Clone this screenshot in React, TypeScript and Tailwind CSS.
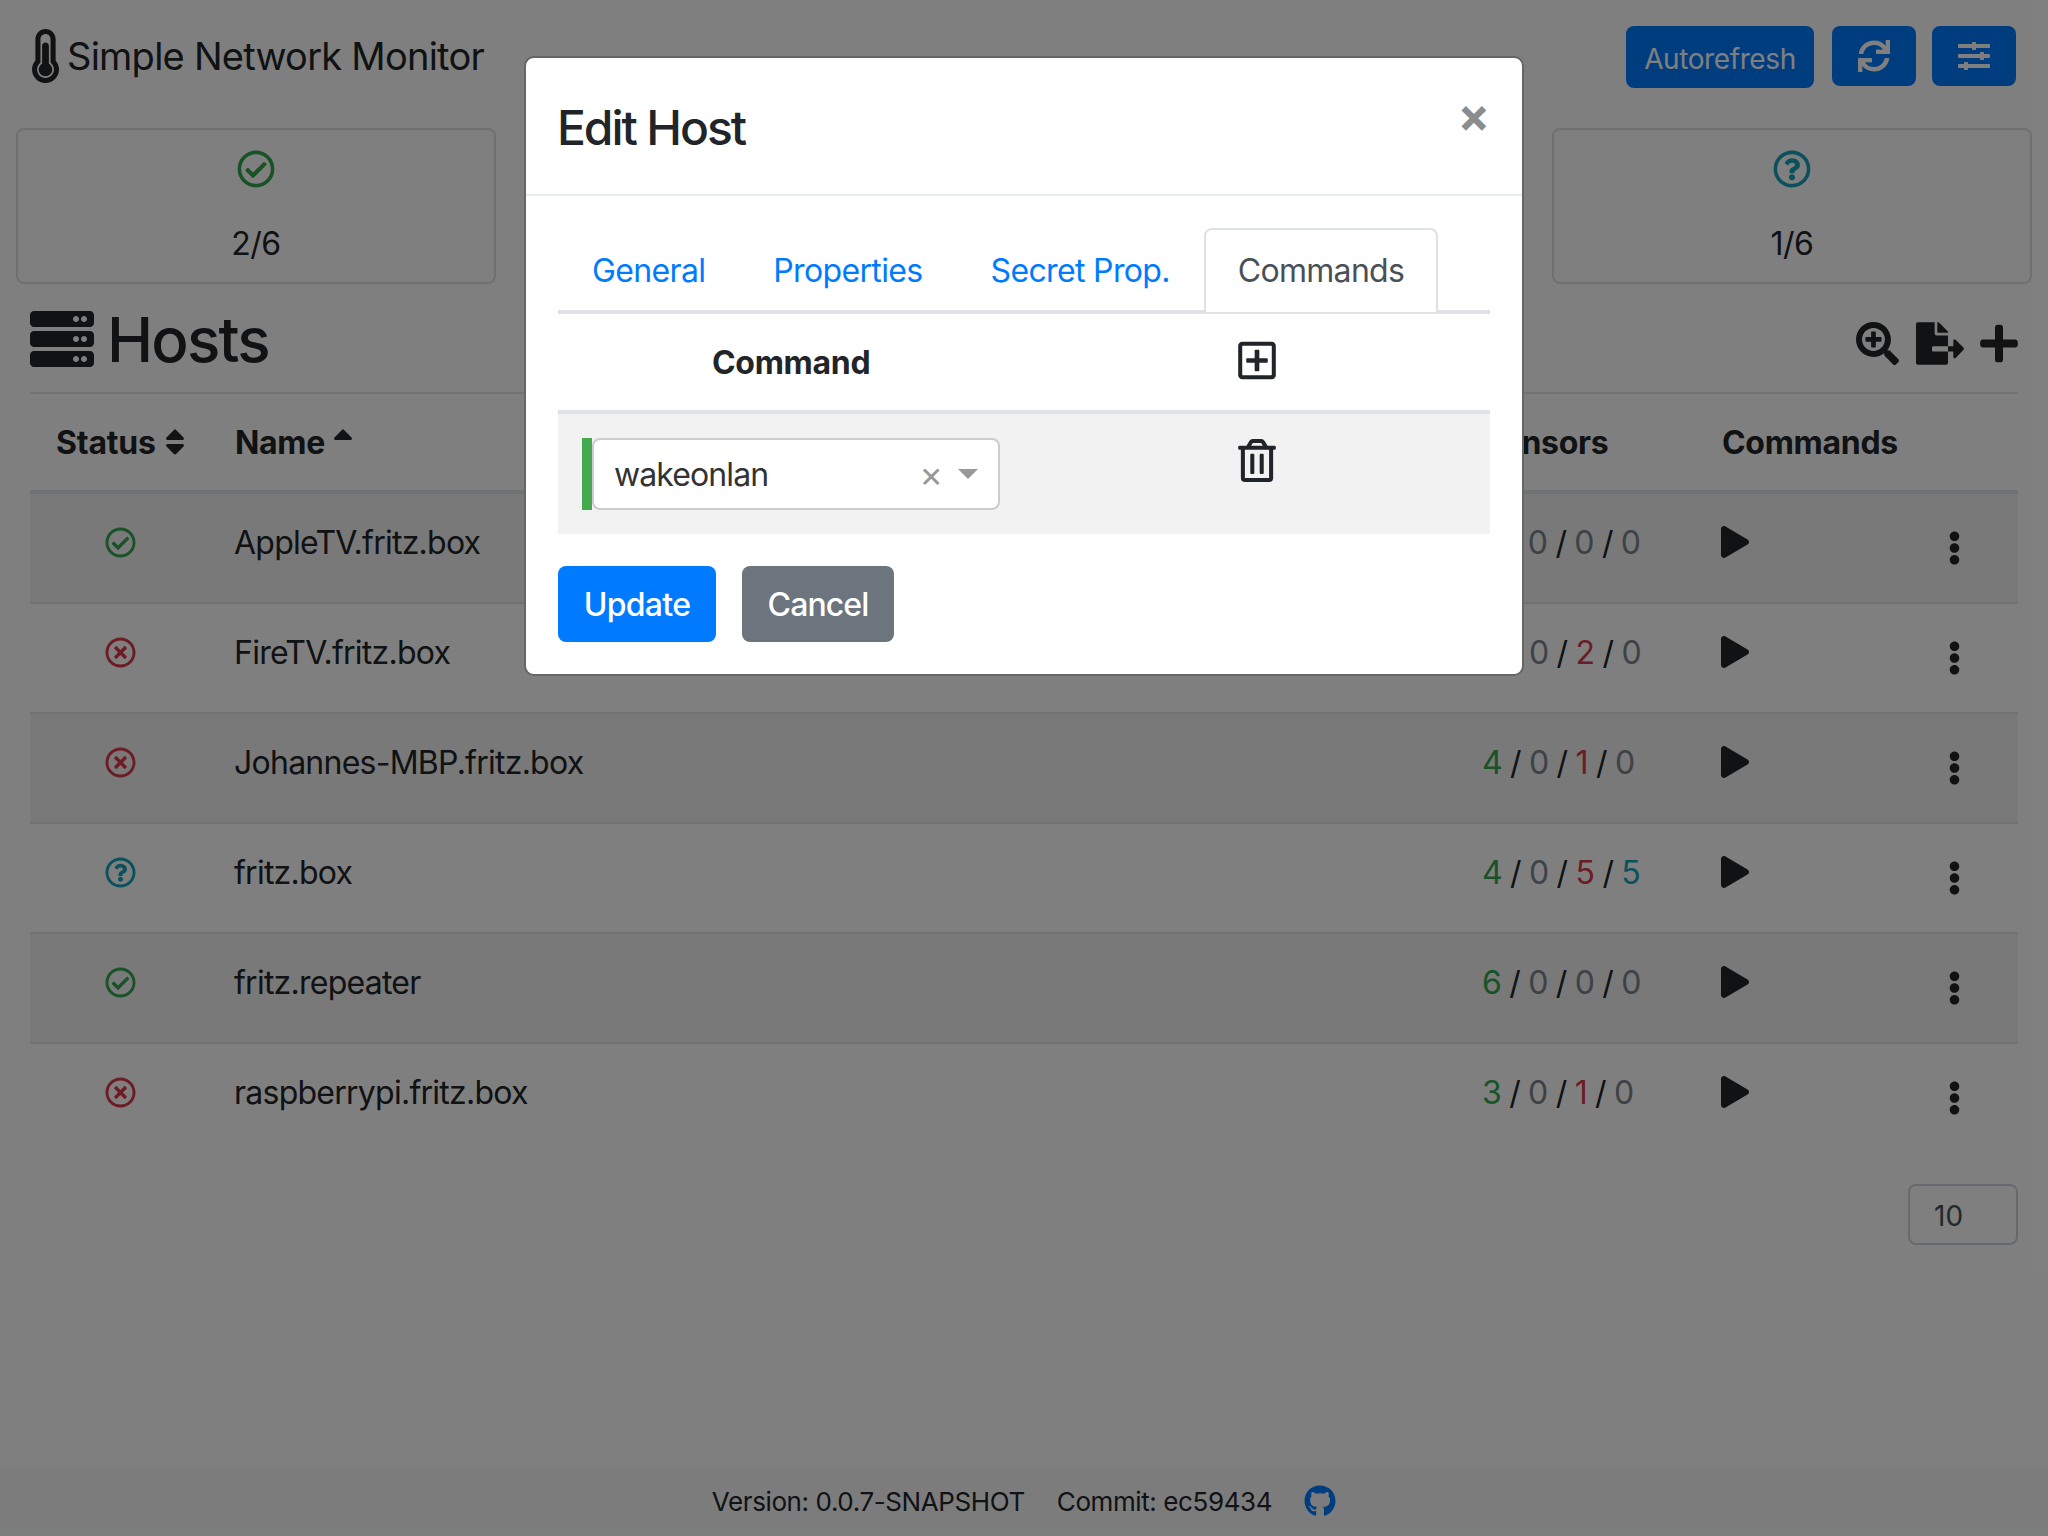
import {
  FaGithub,
  FaPlay,
  FaEllipsisV,
  FaFileExport,
  FaPlus,
  FaRegCheckCircle,
  FaRegPlusSquare,
  FaRegQuestionCircle,
  FaRegTimesCircle,
  FaRegTrashAlt,
  FaSearchPlus,
  FaServer,
  FaSlidersH,
  FaSort,
  FaSortUp,
  FaSync,
  FaThermometerThreeQuarters,
} from "react-icons/fa";

type Status = "ok" | "error" | "unknown";

const hosts: { name: string; status: Status; sensors: [number, number, number, number] }[] = [
  { name: "AppleTV.fritz.box", status: "ok", sensors: [5, 0, 0, 0] },
  { name: "FireTV.fritz.box", status: "error", sensors: [4, 0, 2, 0] },
  { name: "Johannes-MBP.fritz.box", status: "error", sensors: [4, 0, 1, 0] },
  { name: "fritz.box", status: "unknown", sensors: [4, 0, 5, 5] },
  { name: "fritz.repeater", status: "ok", sensors: [6, 0, 0, 0] },
  { name: "raspberrypi.fritz.box", status: "error", sensors: [3, 0, 1, 0] },
];

function StatusIcon({ status, className }: { status: Status; className: string }) {
  if (status === "ok") return <FaRegCheckCircle className={`text-[#33a44f] ${className}`} />;
  if (status === "error") return <FaRegTimesCircle className={`text-[#d8384a] ${className}`} />;
  return <FaRegQuestionCircle className={`text-[#17a2b8] ${className}`} />;
}

function SummaryCard({ children, label }: { children?: React.ReactNode; label?: string }) {
  return (
    <div className="h-[156px] w-[480px] rounded-lg border-2 border-[#e0e0e0] flex flex-col items-center pt-[20px]">
      {children}
      {label && <div className="mt-[32px] text-[32px] leading-[48px] tracking-[-0.5px]">{label}</div>}
    </div>
  );
}

// sensor counts: ok / warn / error / unknown, colored only when non zero
function SensorCounts({ values }: { values: number[] }) {
  const colors = ["text-[#33a44f]", "text-[#ffc107]", "text-[#d8384a]", "text-[#17a2b8]"];
  return (
    <div className="w-[239px] pl-[23px] pt-[25px] text-[32px] leading-[48px] tracking-[-0.8px] whitespace-pre">
      {values.map((v, i) => (
        <span key={i}>
          {i > 0 && " / "}
          <span className={v === 0 ? "text-[#7b848c]" : colors[i]}>{v}</span>
        </span>
      ))}
    </div>
  );
}

function HostRow({ host, index }: { host: (typeof hosts)[number]; index: number }) {
  return (
    <div
      className={`flex items-start ${index === 0 ? "h-[108px]" : "h-[110px] border-t-2 border-[#dee2e6]"} ${
        index % 2 === 0 ? "bg-[#f2f2f2]" : ""
      }`}
    >
      <div className="w-[181px] flex justify-center pt-[33px]">
        <StatusIcon status={host.status} className="w-[31px] h-[31px]" />
      </div>
      <div className="w-[1248px] pl-[23px] pt-[25px] text-[32px] leading-[48px] tracking-[-0.75px]">{host.name}</div>
      <SensorCounts values={host.sensors} />
      <div className="w-[232px] pl-[23px] pt-[32px]">
        <FaPlay className="w-[28px] h-[32px]" />
      </div>
      <div className="flex-1 pl-[18px] pt-[37px]">
        <FaEllipsisV className="w-[13px] h-[34px]" />
      </div>
    </div>
  );
}

function EditHostModal() {
  const tabs = ["General", "Properties", "Secret Prop."];
  return (
    <div className="absolute inset-0 bg-black/50 flex justify-center items-start pt-[56px]">
      <div className="w-[1000px] bg-white rounded-[10px] border-2 border-[#666666] text-[#212529]">
        <div className="flex justify-between items-start border-b-2 border-[#e9ecef] p-[32px]">
          <h4 className="text-[48px] leading-[72px] pt-[2px] h-[72px] -ml-[1px] font-medium tracking-[-2.1px]">Edit Host</h4>
          <span className="text-[48px] leading-[48px] pt-[1px] font-bold text-[#8c8c8c]">×</span>
        </div>
        <div className="p-[32px]">
          <div className="flex h-[86px] border-b-4 border-[#dee2e6]">
            {tabs.map((t) => (
              <div key={t} className="px-[34px] pt-[19px] text-[32px] leading-[48px] tracking-[-0.65px] text-[#007bff]">
                {t}
              </div>
            ))}
            <div className="h-[84px] px-[32px] pt-[17px] border-2 border-b-0 border-[#dee2e6] rounded-t-lg bg-white text-[32px] leading-[48px] tracking-[-0.7px] text-[#495057]">
              Commands
            </div>
          </div>

          <div className="flex h-[100px] border-b-4 border-[#dee2e6]">
            <div className="w-[656px] pl-[154px] pt-[25px] text-[32px] leading-[48px] font-bold tracking-[-0.3px]">Command</div>
            <div className="pl-[24px] pt-[25px]">
              <FaRegPlusSquare className="w-[38px] h-[43px]" />
            </div>
          </div>

          <div className="flex h-[120px] bg-[#f2f2f2]">
            <div className="w-[656px] pl-[24px] pt-[24px]">
              <div className="flex w-[418px] h-[72px] border-l-[10px] border-[#44aa4d]">
                <div className="flex-1 flex items-center bg-white border-2 border-[#cccccc] rounded-lg pl-[20px] pr-[20px]">
                  <span className="flex-1 pt-[2px] text-[32px] tracking-[-0.9px] text-[#333333]">wakeonlan</span>
                  <span className="text-[36px] leading-[36px] text-[#999999] mr-[15px]">×</span>
                  <svg viewBox="0 0 20 10" className="w-[20px] h-[10px] fill-[#999999]">
                    <polygon points="0,0 20,0 10,10" />
                  </svg>
                </div>
              </div>
            </div>
            <div className="pl-[24px] pt-[25px]">
              <FaRegTrashAlt className="w-[38px] h-[43px]" />
            </div>
          </div>

          <div className="flex gap-[26px] mt-[32px]">
            <button className="h-[76px] w-[158px] pt-[2px] rounded-lg bg-[#007bff] text-white text-[32px] font-medium tracking-[-0.7px]">Update</button>
            <button className="h-[76px] w-[152px] pt-[2px] rounded-lg bg-[#6c757d] text-white text-[32px] font-medium tracking-[-0.9px]">Cancel</button>
          </div>
        </div>
      </div>
    </div>
  );
}

export default function App() {
  return (
    <div className="relative h-[1536px] bg-white text-[#212529] font-[Inter,sans-serif] flex flex-col overflow-hidden">
      <header className="h-[128px] flex justify-between items-start pl-[32px] pr-[32px] pt-[26px]">
        <div className="flex items-center gap-[8px]">
          <FaThermometerThreeQuarters className="w-[27px] h-[54px]" />
          <span className="text-[38px] leading-[60px] tracking-[-0.75px]">Simple Network Monitor</span>
        </div>
        <div className="flex items-start">
          <button className="h-[62px] w-[188px] pt-[3px] rounded-lg bg-[#007bff] text-white text-[28px] tracking-[-0.4px]">Autorefresh</button>
          <button className="ml-[18px] h-[60px] w-[84px] rounded-lg bg-[#007bff] text-white flex items-center justify-center">
            <FaSync className="w-[32px] h-[32px]" />
          </button>
          <button className="ml-[16px] h-[60px] w-[84px] rounded-lg bg-[#007bff] text-white flex items-center justify-center">
            <FaSlidersH className="w-[32px] h-[32px]" />
          </button>
        </div>
      </header>

      <section className="flex gap-[32px] px-[16px]">
        <SummaryCard label="2/6">
          <StatusIcon status="ok" className="w-[38px] h-[38px]" />
        </SummaryCard>
        {/* these two sit behind the modal */}
        <SummaryCard />
        <SummaryCard />
        <SummaryCard label="1/6">
          <StatusIcon status="unknown" className="w-[38px] h-[38px]" />
        </SummaryCard>
      </section>

      <main className="px-[30px]">
        <div className="flex items-center justify-between h-[110px] pt-[1px] border-b-2 border-[#dee2e6]">
          <div className="flex items-center gap-[13px]">
            <FaServer className="w-[64px] h-[64px]" />
            <h2 className="text-[62px] leading-[76px] pt-[1px] h-[76px] font-medium tracking-[-1.8px]">Hosts</h2>
          </div>
          <div className="flex items-center gap-[16px] mt-[10px]">
            <FaSearchPlus className="w-[43px] h-[43px] mr-[1px]" />
            <FaFileExport className="w-[48px] h-[43px]" />
            <FaPlus className="w-[38px] h-[43px]" />
          </div>
        </div>

        <div className="flex h-[100px] border-b-4 border-[#dee2e6] text-[32px] leading-[48px] font-bold pt-[25px] tracking-[-0.3px]">
          <div className="w-[181px] pl-[26px] flex items-start gap-[9px]">
            <span className="tracking-[-0.2px]">Status</span> <FaSort className="w-[20px] h-[32px] mt-[7px]" />
          </div>
          <div className="w-[1248px] pl-[24px] flex items-start gap-[8px]">
            Name <FaSortUp className="w-[20px] h-[32px] mt-[7px]" />
          </div>
          <div className="w-[239px] pl-[23px]">Sensors</div>
          <div className="pl-[24px]">Commands</div>
        </div>

        {hosts.map((h, i) => (
          <HostRow key={h.name} host={h} index={i} />
        ))}

        <div className="flex justify-end mt-[32px]">
          <div className="w-[110px] h-[61px] border-2 border-[#ced4da] rounded-lg pl-[24px] text-[28px] leading-[60px] text-[#495057]">10</div>
        </div>
      </main>

      <footer className="mt-auto h-[70px] bg-[#f8f9fa] flex items-center justify-center gap-[32px] text-[26px] tracking-[-0.4px]">
        <span>Version: 0.0.7-SNAPSHOT</span>
        <span>Commit: ec59434</span>
        <FaGithub className="w-[32px] h-[32px] text-[#007bff]" />
      </footer>

      <EditHostModal />
    </div>
  );
}
